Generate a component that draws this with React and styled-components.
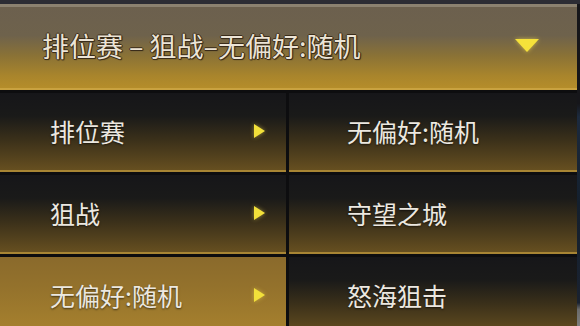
import React from 'react';
import styled, { createGlobalStyle } from 'styled-components';

const GlobalStyle = createGlobalStyle`
    html, body {
        margin: 0;
        padding: 0;
        background: #0d0d0f;
    }
    * {
        box-sizing: border-box;
    }
`;

const Screen = styled.div`
    width: 580px;
    height: 326px;
    overflow: hidden;
    background: #0d0d0f;
    display: flex;
    flex-direction: column;
    font-family: "Noto Sans CJK SC", "Noto Sans", sans-serif;
`;

const TopStrip = styled.div`
    height: 4px;
    flex: none;
    background: #2c2c34;
`;

const Body = styled.div`
    flex: 1;
    display: flex;
`;

const Panel = styled.div`
    width: 577px;
    flex: none;
    display: flex;
    flex-direction: column;
    gap: 3px;
`;

const EdgeStrip = styled.div`
    flex: 1;
    background: linear-gradient(180deg, #16161a 0%, #16161a 30%, #1c2a3e 34%, #14202e 60%, #1a2230 90%, #6a6a6a 92%, #8a8a88 100%);
`;

const Header = styled.div`
    height: 86px;
    display: flex;
    align-items: center;
    justify-content: space-between;
    padding: 0 38px 4px 42px;
    border-top: 3px solid #8b8170;
    border-bottom: 2px solid #c9a240;
    background: linear-gradient(180deg, #6c604e 0%, #6e624c 35%, #8a7236 60%, #a9852c 85%, #b58d2a 100%);
`;

const HeaderTitle = styled.span`
    font-size: 27px;
    color: #ece4d6;
    text-shadow:
        1px 0 0 #3a2c1a, -1px 0 0 #3a2c1a, 0 1px 0 #3a2c1a, 0 -1px 0 #3a2c1a,
        1px 1px 1px #3a2c1a;
`;

const DropTriangle = styled.span`
    width: 0;
    height: 0;
    border-left: 12px solid transparent;
    border-right: 12px solid transparent;
    border-top: 13px solid #f6e23a;
    filter: drop-shadow(0 0 2px rgba(255, 230, 80, 0.6));
`;

const Columns = styled.div`
    display: grid;
    grid-template-columns: 286px 288px;
    column-gap: 3px;
`;

const Column = styled.div`
    display: grid;
    grid-auto-rows: 79px;
    row-gap: 3px;
`;

const Row = styled.div`
    display: flex;
    align-items: center;
    justify-content: space-between;
    padding: 0 21px 2px ${p => p.$indent}px;
    border-bottom: 2px solid ${p => (p.$active ? '#b68e34' : '#a88534')};
    background: ${p =>
        p.$active
            ? 'linear-gradient(180deg, #8a6a2c 0%, #94722c 40%, #a8822e 100%)'
            : 'linear-gradient(180deg, #161619 0%, #1a1a19 30%, #3c311a 62%, #664f20 100%)'};
`;

const Label = styled.span`
    font-size: 25px;
    color: #ece8e0;
    text-shadow: 0 1px 2px rgba(0, 0, 0, 0.6);
`;

const Arrow = styled.span`
    width: 0;
    height: 0;
    border-top: 7px solid transparent;
    border-bottom: 7px solid transparent;
    border-left: 11px solid #f2e03a;
    filter: drop-shadow(0 0 2px rgba(255, 230, 80, 0.5));
`;

const modes = [
    { label: '排位赛' },
    { label: '狙战' },
    { label: '无偏好:随机', active: true },
];

const maps = ['无偏好:随机', '守望之城', '怒海狙击'];

export default function App() {
    return (
        <Screen>
            <GlobalStyle />
            <TopStrip />
            <Body>
                <Panel>
                    <Header>
                        <HeaderTitle>排位赛 – 狙战–无偏好:随机</HeaderTitle>
                        <DropTriangle />
                    </Header>
                    <Columns>
                        <Column>
                            {modes.map(m => (
                                <Row key={m.label} $indent={50} $active={m.active}>
                                    <Label>{m.label}</Label>
                                    <Arrow />
                                </Row>
                            ))}
                        </Column>
                        <Column>
                            {maps.map(name => (
                                <Row key={name} $indent={58}>
                                    <Label>{name}</Label>
                                </Row>
                            ))}
                        </Column>
                    </Columns>
                </Panel>
                <EdgeStrip />
            </Body>
        </Screen>
    );
}
